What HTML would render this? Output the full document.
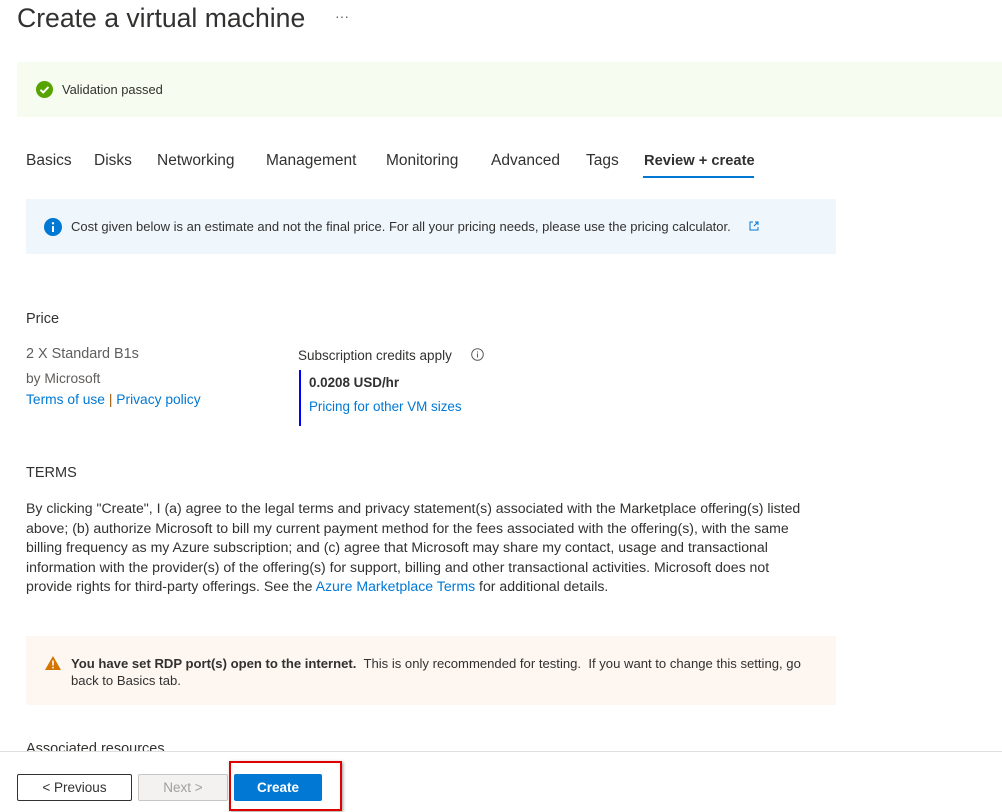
<!DOCTYPE html>
<html><head><meta charset="utf-8"><style>
body{margin:0;width:1002px;height:811px;background:#fff;font-family:"Liberation Sans",sans-serif;color:#323130;position:relative;overflow:hidden}
.a{position:absolute;white-space:nowrap}
.lnk{color:#0078d4}
</style></head><body>
<div class="a" style="left:17px;top:3px;font-size:26.6px;color:#323130">Create a virtual machine</div>
<div class="a" style="left:335px;top:8px;font-size:14px;color:#605e5c">···</div>
<div class="a" style="left:17px;top:62px;width:985px;height:55px;background:#f6fcef"></div>
<svg class="a" style="left:36px;top:81px" width="17" height="17"><circle cx="8.5" cy="8.5" r="8.5" fill="#57a300"/><path d="M4.5 8.8l2.7 2.7 5.3-5.6" stroke="#fff" stroke-width="2" fill="none"/></svg>
<div class="a" style="left:62px;top:82px;font-size:12.9px">Validation passed</div>
<div class="a" style="top:152px;font-size:15.5px;color:#323130;left:0;width:1002px">
<span class="a" style="left:26px">Basics</span><span class="a" style="left:94px">Disks</span><span class="a" style="left:157px">Networking</span><span class="a" style="left:266px">Management</span><span class="a" style="left:386px">Monitoring</span><span class="a" style="left:491px">Advanced</span><span class="a" style="left:586px">Tags</span><span class="a" style="left:644px;font-weight:bold;font-size:14.7px;top:1px">Review + create</span></div>
<div class="a" style="left:643px;top:176px;width:111px;height:2px;background:#0078d4"></div>
<div class="a" style="left:26px;top:199px;width:810px;height:55px;background:#eff6fc"></div>
<svg class="a" style="left:44px;top:218px" width="18" height="18"><circle cx="9" cy="9" r="9" fill="#0078d4"/><rect x="8" y="8" width="2" height="6" fill="#fff"/><circle cx="9" cy="5.3" r="1.2" fill="#fff"/></svg>
<div class="a" style="left:71px;top:219px;font-size:13px">Cost given below is an estimate and not the final price. For all your pricing needs, please use the pricing calculator.</div>
<svg class="a" style="left:749px;top:221px" width="10" height="10"><path d="M4 1H1v8h8V6M5 5l4-4M6 1h3v3" stroke="#0078d4" fill="none"/></svg>
<div class="a" style="left:26px;top:311px;font-size:14.5px">Price</div>
<div class="a" style="left:26px;top:346px;font-size:14.4px;color:#605e5c">2 X Standard B1s</div>
<div class="a" style="left:26px;top:371px;font-size:13.8px;color:#605e5c">by Microsoft</div>
<div class="a" style="left:26px;top:392px;font-size:13.8px"><span class="lnk">Terms of use</span> <span style="color:#a05a00">|</span> <span class="lnk">Privacy policy</span></div>
<div class="a" style="left:298px;top:348px;font-size:13.5px">Subscription credits apply</div>
<svg class="a" style="left:471px;top:348px" width="13" height="13"><circle cx="6.5" cy="6.5" r="5.8" stroke="#605e5c" fill="none"/><rect x="6" y="5.5" width="1" height="4" fill="#605e5c"/><rect x="6" y="3.5" width="1" height="1" fill="#605e5c"/></svg>
<div class="a" style="left:299px;top:370px;width:2px;height:56px;background:#0000ff"></div>
<div class="a" style="left:309px;top:375px;font-size:13.4px;font-weight:bold">0.0208 USD/hr</div>
<div class="a lnk" style="left:309px;top:399px;font-size:13.4px">Pricing for other VM sizes</div>
<div class="a" style="left:26px;top:465px;font-size:14.5px">TERMS</div>
<div class="a" style="left:26px;top:499px;font-size:14.1px;line-height:19.6px">By clicking "Create", I (a) agree to the legal terms and privacy statement(s) associated with the Marketplace offering(s) listed<br>above; (b) authorize Microsoft to bill my current payment method for the fees associated with the offering(s), with the same<br>billing frequency as my Azure subscription; and (c) agree that Microsoft may share my contact, usage and transactional<br>information with the provider(s) of the offering(s) for support, billing and other transactional activities. Microsoft does not<br>provide rights for third-party offerings. See the <span class="lnk">Azure Marketplace Terms</span> for additional details.</div>
<div class="a" style="left:26px;top:636px;width:810px;height:69px;background:#fdf6f1"></div>
<svg class="a" style="left:44px;top:655px" width="18" height="16"><path d="M9 1L17 15H1z" fill="#d47500"/><rect x="8.2" y="5.5" width="1.6" height="5" fill="#fff"/><rect x="8.2" y="11.8" width="1.6" height="1.6" fill="#fff"/></svg>
<div class="a" style="left:71px;top:655px;font-size:13.1px;line-height:17px"><b>You have set RDP port(s) open to the internet.</b>&nbsp; This is only recommended for testing.&nbsp; If you want to change this setting, go<br>back to Basics tab.</div>
<div class="a" style="left:26px;top:741px;font-size:14.5px">Associated resources</div>
<div class="a" style="left:0;top:751px;width:1002px;height:60px;background:#fff;border-top:1px solid #e1dfdd"></div>
<div class="a" style="left:17px;top:774px;width:113px;height:25px;border:1px solid #323130;border-radius:2px;font-size:13.5px;text-align:center;line-height:25px">&lt; Previous</div>
<div class="a" style="left:138px;top:774px;width:88px;height:25px;border:1px solid #c8c6c4;background:#f3f2f1;border-radius:2px;font-size:13.5px;color:#a19f9d;text-align:center;line-height:25px">Next &gt;</div>
<div class="a" style="left:229px;top:761px;width:109px;height:46px;border:2px solid #e00000;box-shadow:1px 1px 3px #999"></div>
<div class="a" style="left:234px;top:774px;width:88px;height:27px;background:#0078d4;border-radius:2px;font-size:13.5px;color:#fff;font-weight:bold;text-align:center;line-height:27px">Create</div>
</body></html>
